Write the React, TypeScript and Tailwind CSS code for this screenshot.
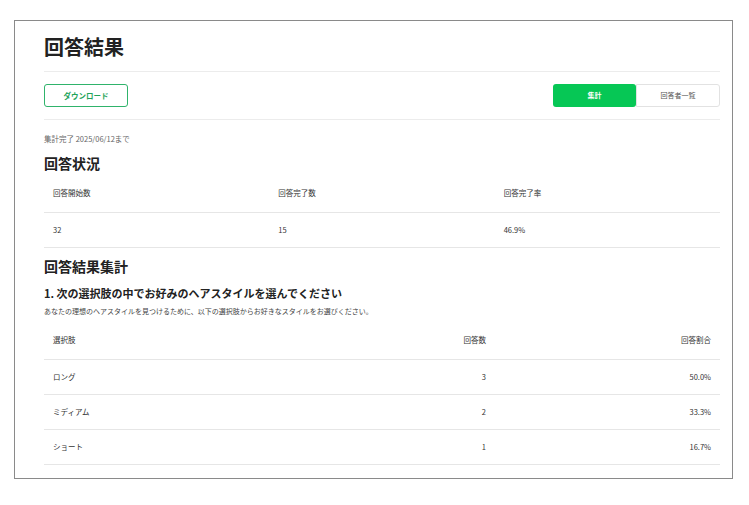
export default function App() {
  const f = { fontFamily: '"Noto Sans CJK JP", "Noto Sans", sans-serif' };
  const rows = [
    ["ロング", "3", "50.0%"],
    ["ミディアム", "2", "33.3%"],
    ["ショート", "1", "16.7%"],
  ];
  return (
    <div className="w-[749px] h-[505px] bg-white pt-[20px] pl-[14px]" style={f}>
      <div className="w-[719px] h-[459px] border border-[#8a8a8a] pl-[29px] pr-[12px] overflow-hidden text-[#222]">
        <div className="h-[51px] flex items-center border-b border-[#ececec] pt-[2px]">
          <h1 className="text-[20px] font-bold leading-none">回答結果</h1>
        </div>
        <div className="h-[48px] flex items-center justify-between border-b border-[#ececec]">
          <button className="w-[84px] h-[23px] border border-[#2fb36b] rounded-[3px] text-[#1fa35a] text-[7.5px] font-bold">ダウンロード</button>
          <div className="flex">
            <div className="w-[83px] h-[23px] bg-[#06c755] rounded-[3px] text-white text-[7px] font-bold flex items-center justify-center">集計</div>
            <div className="w-[84px] h-[23px] border border-[#e2e2e2] rounded-r-[3px] text-[#555] text-[7px] flex items-center justify-center">回答者一覧</div>
          </div>
        </div>
        <div className="text-[7.5px] text-[#666] mt-[15px] leading-none">集計完了 2025/06/12まで</div>
        <h2 className="text-[14px] font-bold mt-[13px] leading-none">回答状況</h2>
        <div className="grid grid-cols-3 text-[7.5px] text-[#333] mt-[5px]">
          <div className="h-[38px] flex items-center pl-[9px] border-b border-[#e6e6e6]">回答開始数</div>
          <div className="h-[38px] flex items-center pl-[9px] border-b border-[#e6e6e6]">回答完了数</div>
          <div className="h-[38px] flex items-center pl-[9px] border-b border-[#e6e6e6]">回答完了率</div>
          <div className="h-[35px] flex items-center pl-[9px] border-b border-[#e6e6e6]">32</div>
          <div className="h-[35px] flex items-center pl-[9px] border-b border-[#e6e6e6]">15</div>
          <div className="h-[35px] flex items-center pl-[9px] border-b border-[#e6e6e6]">46.9%</div>
        </div>
        <h2 className="text-[14px] font-bold mt-[11px] leading-none">回答結果集計</h2>
        <h3 className="text-[11px] font-bold mt-[15px] leading-none">1. 次の選択肢の中でお好みのヘアスタイルを選んでください</h3>
        <p className="text-[7px] text-[#444] mt-[9px] leading-none">あなたの理想のヘアスタイルを見つけるために、以下の選択肢からお好きなスタイルをお選びください。</p>
        <div className="text-[7.5px] text-[#333] mt-[7px]">
          <div className="h-[38px] flex items-center border-b border-[#e6e6e6] px-[9px]">
            <div className="flex-1">選択肢</div>
            <div className="w-[100px] text-right">回答数</div>
            <div className="w-[225px] text-right">回答割合</div>
          </div>
          {rows.map((r) => (
            <div key={r[0]} className="h-[35px] flex items-center border-b border-[#e6e6e6] px-[9px]">
              <div className="flex-1">{r[0]}</div>
              <div className="w-[100px] text-right">{r[1]}</div>
              <div className="w-[225px] text-right">{r[2]}</div>
            </div>
          ))}
        </div>
      </div>
    </div>
  );
}
